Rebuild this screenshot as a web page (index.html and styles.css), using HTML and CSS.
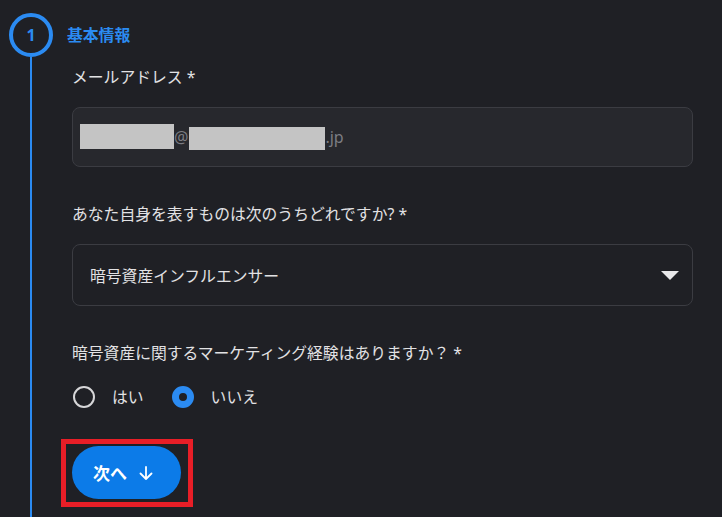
FILE: index.html
```html
<!DOCTYPE html>
<html lang="ja">
<head>
    <meta charset="UTF-8">
    <meta name="viewport" content="width=device-width, initial-scale=1.0">
    <title>基本情報</title>
    <link rel="stylesheet" href="styles.css">
</head>
<body>
    <div class="step">
        <div class="rail">
            <div class="step-circle">1</div>
            <div class="step-line"></div>
        </div>

        <div class="step-body">
            <div class="step-title">基本情報</div>

            <div class="fields">
                <div class="field">
                    <label class="field-label">メールアドレス *</label>
                    <div class="input input-disabled">
                        <span class="redact redact-user"></span><span class="input-text">@</span><span class="redact redact-domain"></span><span class="input-text">.jp</span>
                    </div>
                </div>

                <div class="field">
                    <label class="field-label">あなた自身を表すものは次のうちどれですか? *</label>
                    <div class="input select">
                        <span class="select-value">暗号資産インフルエンサー</span>
                        <span class="select-caret"></span>
                    </div>
                </div>

                <div class="field">
                    <label class="field-label">暗号資産に関するマーケティング経験はありますか？ *</label>
                    <div class="radio-group">
                        <label class="radio">
                            <span class="radio-mark"></span>
                            はい
                        </label>
                        <label class="radio">
                            <span class="radio-mark radio-checked"></span>
                            いいえ
                        </label>
                    </div>
                </div>

                <div class="actions">
                    <button class="next-button">
                        次へ
                        <svg width="14" height="14" viewBox="0 0 14 14" fill="none" stroke="white" stroke-width="1.8" stroke-linecap="round" stroke-linejoin="round">
                            <path d="M7 1v12M1.5 7.5L7 13l5.5-5.5"/>
                        </svg>
                    </button>
                </div>
            </div>
        </div>
    </div>
</body>
</html>
```

FILE: styles.css
```css
* {
    margin: 0;
    padding: 0;
    box-sizing: border-box;
}

body {
    font-family: 'Noto Sans', 'Noto Sans CJK JP', sans-serif;
    background: #1f2025;
    color: #e2e2e4;
    height: 517px;
    overflow: hidden;
}

.step {
    display: flex;
    min-height: 517px;
}

/* 左側のステップ表示 */
.rail {
    width: 62px;
    display: flex;
    flex-direction: column;
    align-items: center;
    padding-top: 13px;
}

.step-circle {
    width: 44px;
    height: 44px;
    border: 4px solid #2b8bf2;
    border-radius: 50%;
    display: flex;
    align-items: center;
    justify-content: center;
    color: #2b8bf2;
    font-size: 16px;
    font-weight: bold;
}

.step-line {
    flex: 1;
    width: 2px;
    background: #2b8bf2;
}

.step-body {
    flex: 1;
    margin-left: 5px;
    padding-top: 25px;
    padding-right: 29px;
}

.step-title {
    color: #2b8bf2;
    font-size: 15.8px;
    font-weight: bold;
    line-height: 20px;
}

.fields {
    padding-left: 5px;
    padding-top: 22px;
}

.field {
    margin-bottom: 37px;
}

.field-label {
    display: block;
    font-size: 15.8px;
    line-height: 20px;
    margin-bottom: 20px;
}

.input {
    display: flex;
    align-items: center;
    height: 60px;
    border: 1px solid #3b3c42;
    border-radius: 8px;
    padding: 0 13px 0 7px;
}

.input-disabled {
    background: #27282d;
}

.input-text {
    color: #7c7d83;
    font-size: 16px;
}

.redact {
    display: inline-block;
    background: #c4c4c4;
}

.redact-user {
    width: 94px;
    height: 25px;
    margin-top: -1px;
}

.redact-domain {
    width: 136px;
    height: 23px;
    margin-top: 3px;
    margin-left: 1px;
}

.select {
    height: 62px;
    padding-left: 17px;
    justify-content: space-between;
}

.select-value {
    font-size: 15.8px;
}

.select-caret {
    width: 0;
    height: 0;
    border-left: 9px solid transparent;
    border-right: 9px solid transparent;
    border-top: 9px solid #e8e8ea;
}

.field:has(.radio-group) .field-label {
    margin-bottom: 23px;
}

.radio-group {
    display: flex;
    gap: 28px;
    padding-left: 1px;
}

.radio {
    display: flex;
    align-items: center;
    gap: 17px;
    font-size: 15.8px;
    line-height: 22px;
}

.radio-mark {
    width: 22px;
    height: 22px;
    border: 2px solid #d6d6d8;
    border-radius: 50%;
}

.radio-checked {
    border: 7px solid #2b8bf2;
    background: #1f2025;
}

.actions {
    padding-top: 1px;
}

.next-button {
    position: relative;
    display: inline-flex;
    align-items: center;
    gap: 12px;
    height: 53px;
    width: 109px;
    padding: 0 0 0 21px;
    border: none;
    border-radius: 27px;
    background: #0c7be8;
    color: white;
    font-family: inherit;
    font-size: 17px;
    font-weight: bold;
}

/* 注釈の赤枠 */
.next-button::after {
    content: '';
    position: absolute;
    top: -7px;
    left: -11px;
    right: -12px;
    bottom: -8px;
    border: 5px solid #e81e27;
}
```
